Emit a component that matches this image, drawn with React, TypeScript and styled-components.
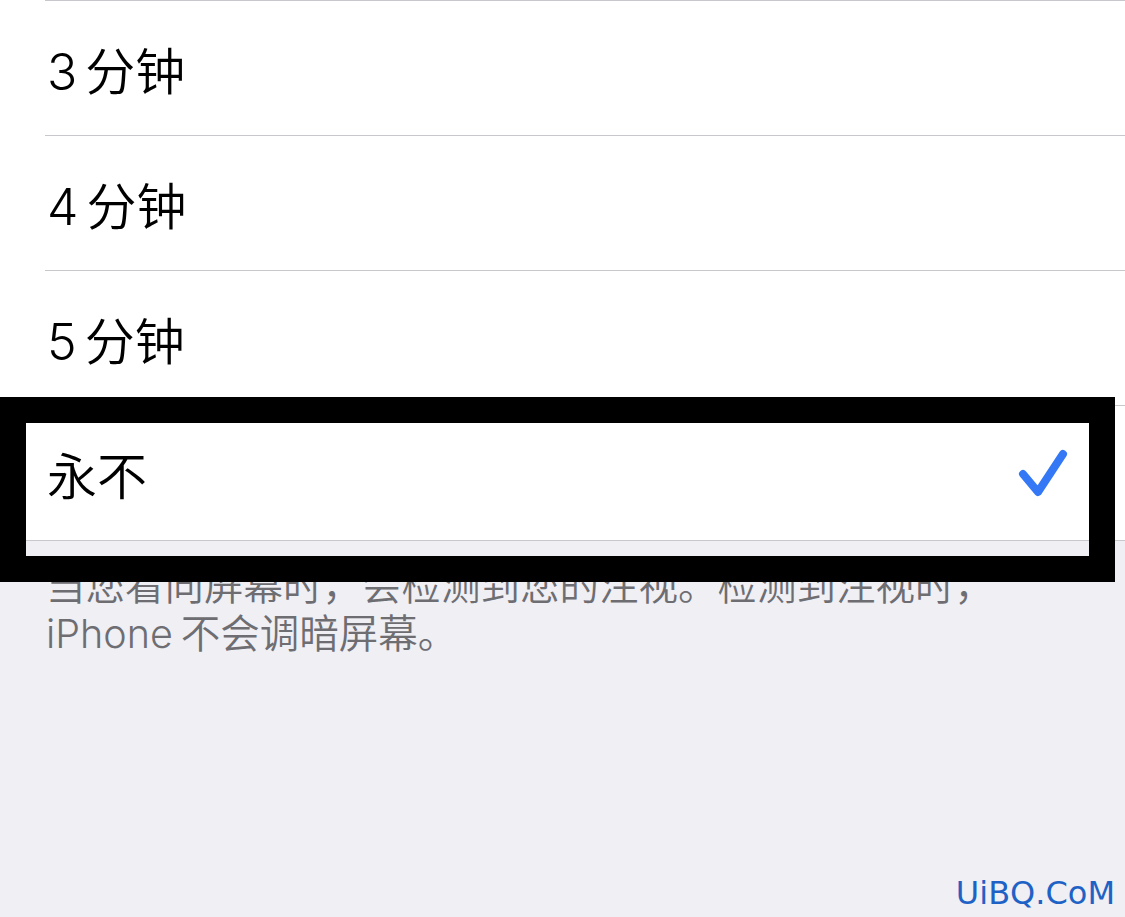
import styled, { createGlobalStyle } from 'styled-components';

const GlobalStyle = createGlobalStyle`
  html, body {
    margin: 0;
    padding: 0;
    background: #efeff4;
  }
  #root {
    min-height: 100vh;
  }
`;

const Page = styled.div`
  display: flex;
  flex-direction: column;
  min-height: 100vh;
  background: #efeff4;
  font-family: Inter, "Noto Sans CJK SC", "Noto Sans", sans-serif;
`;

const List = styled.ul`
  margin: 0;
  padding: 0;
  list-style: none;
  background: #fff;
  border-bottom: 1px solid #c8c7cc;
`;

const Row = styled.li`
  position: relative;
  padding-left: 45px;
  height: 135px;
`;

const RowBody = styled.div`
  display: flex;
  align-items: center;
  justify-content: space-between;
  height: 134px;
  padding-right: 57px;
  border-top: 1px solid #c8c7cc;
`;

const Label = styled.span`
  font-size: 50px;
  font-weight: 350;
  color: #000;
  padding-left: 2px;
`;

const Num = styled.span`
  margin-right: 8px;
`;

const Highlight = styled.div`
  position: absolute;
  top: -8px;
  left: 0;
  right: 10px;
  bottom: -42px;
  border: 26px solid #000;
  z-index: 1;
  pointer-events: none;
`;

const Footer = styled.p`
  margin: 0;
  padding: 21px 45px 0 46px;
  font-size: 39.5px;
  font-weight: 350;
  line-height: 48px;
  color: #6d6d72;
`;

const Latin = styled.span`
  margin-right: 8px;
`;

const Watermark = styled.div`
  margin-top: auto;
  align-self: flex-end;
  padding: 0 10px 5px 0;
  font-family: "DejaVu Sans", Verdana, sans-serif;
  font-size: 32px;
  line-height: 38px;
  color: #1f62c6;
`;

const CheckIcon = () => (
  <svg width="50" height="50" viewBox="0 0 50 50">
    <path
      d="M5 26 L20 44 L45 6"
      fill="none"
      stroke="#3478f6"
      strokeWidth="8"
      strokeLinecap="round"
      strokeLinejoin="round"
    />
  </svg>
);

const options = [
  { num: '3', unit: '分钟', selected: false },
  { num: '4', unit: '分钟', selected: false },
  { num: '5', unit: '分钟', selected: false },
  { num: '', unit: '永不', selected: true },
];

export default function App() {
  return (
    <>
      <GlobalStyle />
      <Page>
        <List>
          {options.map(opt => (
            <Row key={opt.num + opt.unit}>
              <RowBody>
                <Label>
                  {opt.num && <Num>{opt.num}</Num>}
                  {opt.unit}
                </Label>
                {opt.selected && <CheckIcon />}
              </RowBody>
              {opt.selected && <Highlight />}
            </Row>
          ))}
        </List>
        <Footer>
          当您看向屏幕时，会检测到您的注视。检测到注视时，<Latin>iPhone</Latin>不会调暗屏幕。
        </Footer>
        <Watermark>UiBQ.CoM</Watermark>
      </Page>
    </>
  );
}
